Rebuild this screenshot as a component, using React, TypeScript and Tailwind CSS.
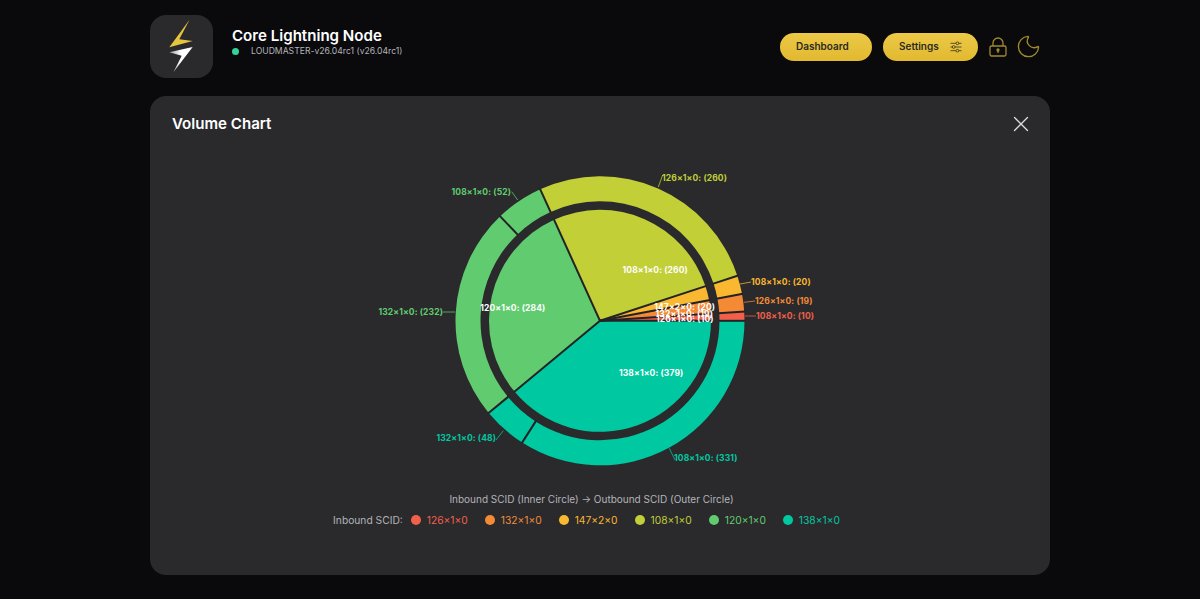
import React from "react";
import { X, Moon } from "lucide-react";

const CX = 150, CY = 150.8;
const OX = 450, OY = 170; // page position of the svg's origin, used to express label anchors
const RED = "#f2604a", ORANGE = "#f58a36", AMBER = "#f9b82f", LIME = "#c2cf37", GREEN = "#61cc6f", TEAL = "#00c9a1";
const inner = [
  { v: 10, c: RED, t: "126×1×0: (10)" },
  { v: 19, c: ORANGE, t: "132×1×0: (19)" },
  { v: 20, c: AMBER, t: "147×2×0: (20)" },
  { v: 260, c: LIME, t: "108×1×0: (260)" },
  { v: 284, c: GREEN, t: "120×1×0: (284)" },
  { v: 379, c: TEAL, t: "138×1×0: (379)" },
];
const outer = [
  { v: 10, c: RED, t: "108×1×0: (10)", l: [745, 316, 756, 316], x: 756, y: 316, a: "start" },
  { v: 19, c: ORANGE, t: "126×1×0: (19)", l: [744, 302.3, 755, 301], x: 755, y: 301, a: "start" },
  { v: 20, c: AMBER, t: "108×1×0: (20)", l: [740, 284, 751, 282], x: 751, y: 282, a: "start" },
  { v: 260, c: LIME, t: "126×1×0: (260)", l: [658.3, 187, 662.7, 175], x: 662, y: 177.5, a: "start" },
  { v: 52, c: GREEN, t: "108×1×0: (52)", l: [517.7, 200, 511.7, 191.7], x: 511, y: 191.5, a: "end" },
  { v: 232, c: GREEN, t: "132×1×0: (232)", l: [455, 312, 442.7, 312], x: 443, y: 312, a: "end" },
  { v: 48, c: TEAL, t: "132×1×0: (48)", l: [503.3, 430.7, 496, 440], x: 496, y: 438, a: "end" },
  { v: 331, c: TEAL, t: "108×1×0: (331)", l: [669.3, 448.3, 675, 460], x: 674, y: 458, a: "start" },
];
const TOTAL = 972;
const pt = (r: number, deg: number): [number, number] => {
  const a = (deg * Math.PI) / 180;
  return [CX + r * Math.cos(a), CY - r * Math.sin(a)];
};
const sector = (r0: number, r1: number, a0: number, a1: number) => {
  const large = a1 - a0 > 180 ? 1 : 0;
  const [x0, y0] = pt(r1, a0);
  const [x1, y1] = pt(r1, a1);
  if (r0 === 0) return `M${CX} ${CY}L${x0} ${y0}A${r1} ${r1} 0 ${large} 0 ${x1} ${y1}Z`;
  const [x2, y2] = pt(r0, a1);
  const [x3, y3] = pt(r0, a0);
  return `M${x0} ${y0}A${r1} ${r1} 0 ${large} 0 ${x1} ${y1}L${x2} ${y2}A${r0} ${r0} 0 ${large} 1 ${x3} ${y3}Z`;
};
const divider = (r0: number, r1: number, a: number) => {
  const [x0, y0] = pt(r0, a);
  const [x1, y1] = pt(r1 + 1, a);
  return `M${x0} ${y0}L${x1} ${y1}`;
};
const withAngles = <T extends { v: number }>(list: T[]) => {
  let acc = 0;
  return list.map((d) => {
    const a0 = (acc / TOTAL) * 360;
    acc += d.v;
    return { ...d, a0, a1: (acc / TOTAL) * 360 };
  });
};
const labelStyle = "font-bold text-[8.5px] tracking-[0.12px]";

function Chart() {
  const ins = withAngles(inner);
  const outs = withAngles(outer);
  return (
    <svg width="500" height="300" viewBox="-100 0 500 300" className="block">
      {ins.map((d) => (
        <path key={d.t} d={sector(0, 111, d.a0, d.a1)} fill={d.c} />
      ))}
      {ins.map((d) => (
        <path key={"d" + d.t} d={divider(0, 111, d.a0)} stroke="#232326" strokeWidth="2" />
      ))}
      {outs.map((d) => (
        <path key={d.t + d.a0} d={sector(119.5, 144.5, d.a0, d.a1)} fill={d.c} />
      ))}
      {outs.map((d) => (
        <path key={"d" + d.t + d.a0} d={divider(118.5, 144.5, d.a0)} stroke="#232326" strokeWidth="2" />
      ))}
      {outs.map((d) => {
        const sx = -OX + 0;
        return (
          <g key={"l" + d.t + d.a0}>
            <path
              d={`M${d.l[0] + sx} ${d.l[1] - OY}L${d.l[2] + sx} ${d.l[3] - OY}`}
              stroke={d.c}
              strokeWidth="1"
              fill="none"
              opacity="0.75"
            />
            <text
              x={d.x + sx}
              y={d.y - OY + 3}
              textAnchor={d.a as "start" | "end"}
              fill={d.c}
              className={labelStyle}
            >
              {d.t}
            </text>
          </g>
        );
      })}
      {ins.map((d) => {
        const mid = (d.a0 + d.a1) / 2;
        const [x, y] = pt(56, mid);
        return (
          <text
            key={"i" + d.t}
            x={x}
            y={y + 3}
            textAnchor={x > CX ? "start" : "end"}
            fill="#ffffff"
            className={labelStyle}
          >
            {d.t}
          </text>
        );
      })}
    </svg>
  );
}

const legend = [
  { c: RED, t: "126×1×0" },
  { c: ORANGE, t: "132×1×0" },
  { c: AMBER, t: "147×2×0" },
  { c: LIME, t: "108×1×0" },
  { c: GREEN, t: "120×1×0" },
  { c: TEAL, t: "138×1×0" },
];

function Logo() {
  return (
    <svg width="63" height="63" viewBox="0 0 63 63">
      <defs>
        <linearGradient id="bolt" x1="0" y1="0" x2="1" y2="0">
          <stop offset="0" stopColor="#9a9a9c" />
          <stop offset="0.5" stopColor="#ffffff" />
        </linearGradient>
      </defs>
      <path d="M39.5 4.7 L19.3 32.3 L42.7 26 L29.3 24.3 Z" fill="#e6c440" />
      <path d="M42.7 32 L19.3 37.3 L31.7 40.7 L23.5 57 Z" fill="url(#bolt)" />
    </svg>
  );
}

export default function App() {
  return (
    <div className="w-full h-[599px] overflow-hidden bg-[#0a0a0d] flex justify-center font-['Inter',sans-serif]">
      <div className="w-[900px] flex flex-col">
        <header className="h-[96px] flex items-start justify-between pt-[15px] pr-[8px]">
          <div className="flex items-center gap-[19px]">
            <div className="w-[63px] h-[63px] rounded-[16px] bg-[#2a2a2d] flex items-center justify-center">
              <Logo />
            </div>
            <div className="flex flex-col pb-[11px]">
              <div className="text-white text-[15.1px] leading-[21px] font-semibold">Core Lightning Node</div>
              <div className="flex items-center h-[12px]">
                <span className="w-[7px] h-[7px] rounded-full bg-[#34d399]" />
                <span className="ml-[12px] text-[8.65px] text-[#b4b4b8]">LOUDMASTER-v26.04rc1 (v26.04rc1)</span>
              </div>
            </div>
          </div>
          <div className="flex items-center gap-[11px] h-[63px]">
            <button className="w-[92px] h-[28px] rounded-full bg-gradient-to-b from-[#ecc947] to-[#e2b92f] text-[#2c2a1e] text-[10px] font-semibold text-left pl-[16px]">Dashboard</button>
            <button className="w-[95px] h-[28px] rounded-full bg-gradient-to-b from-[#ecc947] to-[#e2b92f] text-[#2c2a1e] text-[10px] font-semibold flex items-center pl-[16px] gap-[11px]">
              Settings
              <svg width="12" height="12" viewBox="0 0 13 13" fill="none" stroke="#2c2a1e" strokeWidth="0.8">
                <path d="M0.5 2.5H6.5M9.5 2.5H12.5M0.5 6.5H2.5M5.5 6.5H12.5M0.5 10.5H6.5M9.5 10.5H12.5" />
                <circle cx="8" cy="2.5" r="1.5" />
                <circle cx="4" cy="6.5" r="1.5" />
                <circle cx="8" cy="10.5" r="1.5" />
              </svg>
            </button>
            <svg width="18" height="20" viewBox="0 0 18 20" fill="none" stroke="#a08a2d" strokeWidth="1.3">
              <rect x="1" y="9" width="16" height="10" rx="1.5" />
              <path d="M4 9V6a5 5 0 0 1 10 0v3" />
              <circle cx="9" cy="13" r="1" fill="#a08a2d" />
              <path d="M9 13.5v2.5" />
            </svg>
            <Moon size={27} strokeWidth={1.2} className="text-[#a08a2d] -ml-[3px]" />
          </div>
        </header>
        <main className="h-[479px] rounded-[16px] bg-[#2a2a2d] flex flex-col items-center relative">
          <div className="w-full flex items-center justify-between pl-[22px] pr-[16px] pt-[17px]">
            <h2 className="text-white text-[15.1px] leading-[22px] font-semibold">Volume Chart</h2>
            <X size={26} strokeWidth={1.2} className="text-[#dcdcdf] -my-[2px]" />
          </div>
          <div className="mt-[35px]">
            <Chart />
          </div>
          <div className="mt-[21px] mr-[17px] text-[10px] leading-[16px] text-[#b4b4b8]">Inbound SCID (Inner Circle) → Outbound SCID (Outer Circle)</div>
          <div className="mt-[5px] mr-[27px] flex items-center text-[10.25px] leading-[16px]">
            <span className="text-[#b4b4b8] mr-[8px]">Inbound SCID:</span>
            {legend.map((l) => (
              <span key={l.t} className="flex items-center mr-[17px] last:mr-0 gap-[6px]">
                <span className="w-[10px] h-[10px] rounded-full" style={{ background: l.c }} />
                <span style={{ color: l.c }}>{l.t}</span>
              </span>
            ))}
          </div>
        </main>
      </div>
    </div>
  );
}
